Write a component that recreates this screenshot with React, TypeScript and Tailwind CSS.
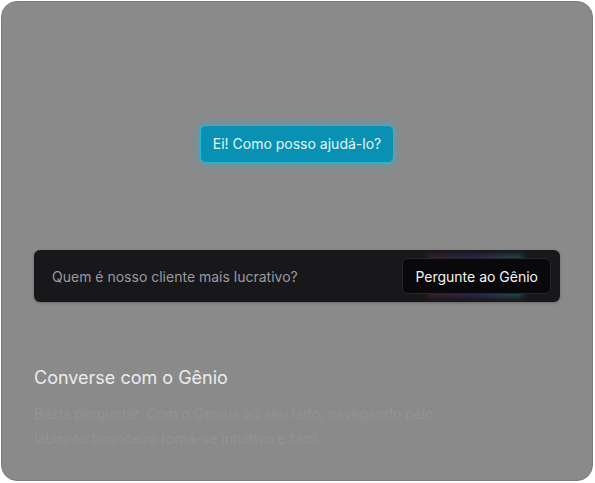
export default function App() {
  return (
    <main className="h-[483px] w-[595px] bg-white p-[1px] font-['Inter',sans-serif]">
      <div className="flex h-[480px] w-[592px] flex-col rounded-2xl border border-[#7d7d7d] bg-[#8a8a8a] px-[32px]">
        {/* bubble */}
        <div className="mt-[123px] flex justify-center">
          <div className="rounded-md border border-[#22b8d6] bg-[#0891b2] px-[12px] py-[8px] text-[14px] leading-[20px] text-[#e6f6fa] shadow-[0_0_7px_2px_rgba(34,184,214,0.4)]">
            Ei! Como posso ajudá-lo?
          </div>
        </div>

        {/* input bar */}
        <div className="mt-[87px] flex h-[52px] items-center justify-between rounded-md bg-[#18181b] pl-[18px] pr-[9px] shadow-[0_1px_3px_rgba(0,0,0,0.25)]">
          <span className="text-[14px] text-[#9a9aa0]">Quem é nosso cliente mais lucrativo?</span>
          <div className="relative">
            <div className="absolute -top-[2px] left-[24px] right-[28px] h-[5px] rounded-full bg-gradient-to-r from-[#6a2a30] via-[#4a2aa0] to-[#1a9a80] opacity-70 blur-[3px]" />
            <div className="absolute -bottom-[2px] left-[24px] right-[28px] h-[5px] rounded-full bg-gradient-to-r from-[#6a2a30] via-[#4a2aa0] to-[#1a9a80] opacity-70 blur-[3px]" />
            <button className="relative h-[36px] rounded-md border border-[#26262b] bg-[#09090b] px-[12px] text-[14px] text-[#f4f4f5]">
              Pergunte ao Gênio
            </button>
          </div>
        </div>

        {/* text */}
        <h2 className="mt-[63px] text-[18px] leading-[26px] text-[#ececec]">Converse com o Gênio</h2>
        <p className="mt-[10px] w-[420px] text-[14px] leading-[25px] text-[#939393]">
          Basta perguntar. Com o Genius ao seu lado, navegando pelo labirinto financeiro torna-se intuitivo e fácil.
        </p>
      </div>
    </main>
  )
}
